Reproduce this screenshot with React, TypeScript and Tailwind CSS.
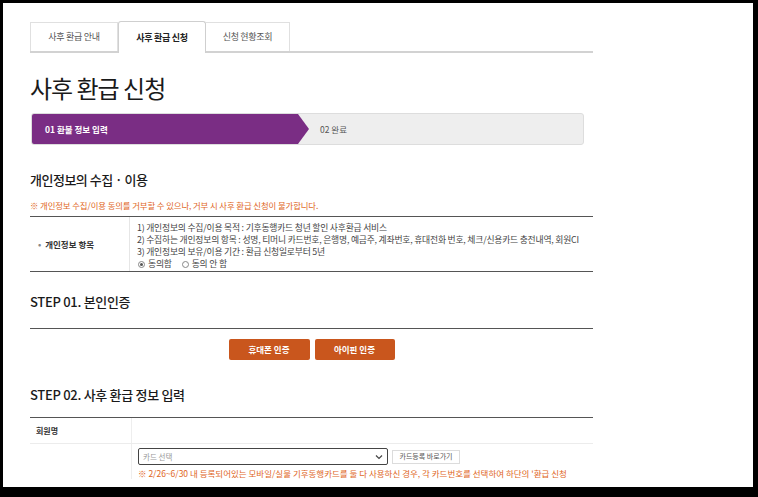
import React from "react";

const F = { fontFamily: '"Noto Sans CJK KR", "Noto Sans", sans-serif' };

export default function App() {
  return (
    <div className="w-[758px] h-[497px] bg-black pt-[3px] pl-[3px] pr-[5px] pb-[10px]" style={F}>
      <div className="bg-white h-full overflow-hidden pl-[27px] text-[#333]">
        <div className="w-[563px]">
          {/* Tabs */}
          <div className="pt-[19px]">
            <div className="flex items-end h-[31px] border-b-2 border-[#d2d2d2]">
              <div className="w-[88px] h-[29px] border border-b-0 border-[#e0e0e0] flex items-center justify-center text-[9px] text-[#555] tracking-[-0.3px]">
                사후 환급 안내
              </div>
              <div className="w-[88px] h-[32px] -mb-[2px] bg-white border border-b-0 border-[#cfcfcf] rounded-t-[3px] flex items-center justify-center text-[9px] font-bold text-[#222] tracking-[-0.3px]">
                사후 환급 신청
              </div>
              <div className="w-[84px] h-[29px] border border-b-0 border-l-0 border-[#e0e0e0] flex items-center justify-center text-[9px] text-[#555] tracking-[-0.3px]">
                신청 현황조회
              </div>
            </div>
          </div>

          {/* Title */}
          <h1 className="mt-[20px] text-[24px] leading-[30px] font-normal text-[#1a1a1a] tracking-[-1px]">사후 환급 신청</h1>

          {/* Progress */}
          <div className="mt-[10px] ml-[1px] w-[553px] h-[32px] bg-[#eeeeee] border border-[#dddddd] rounded-[3px] flex items-center overflow-hidden">
            <div className="w-[277px] h-full bg-[#7a2d84] flex items-center pl-[13px] text-white text-[8.5px] font-bold [clip-path:polygon(0_0,calc(100%-11px)_0,100%_50%,calc(100%-11px)_100%,0_100%)]">
              01 환불 정보 입력
            </div>
            <div className="ml-[11px] text-[8.5px] text-[#555]">02 완료</div>
          </div>

          {/* Privacy */}
          <h2 className="mt-[26px] text-[13px] leading-[18px] font-medium text-[#1a1a1a] tracking-[-0.5px]">개인정보의 수집 · 이용</h2>
          <p className="mt-[10px] text-[8.4px] leading-[12px] text-[#e0661c] tracking-[-0.1px]">
            ※ 개인정보 수집/이용 동의를 거부할 수 있으나, 거부 시 사후 환급 신청이 불가합니다.
          </p>
          <div className="mt-[5px] border-t border-b border-[#555] flex h-[56px]">
            <div className="w-[100px] border-r border-[#e6e6e6] flex items-center pl-[8px] text-[8.5px] font-bold text-[#333]">
              <span className="text-[#888] mr-[4px]">•</span>개인정보 항목
            </div>
            <div className="flex-1 pl-[7px] pt-[5px] text-[8.8px] leading-[12px] text-[#444] tracking-[-0.2px] whitespace-nowrap">
              <div>1) 개인정보의 수집/이용 목적 : 기후동행카드 청년 할인 사후환급 서비스</div>
              <div>2) 수집하는 개인정보의 항목 : 성명, 티머니 카드번호, 은행명, 예금주, 계좌번호, 휴대전화 번호, 체크/신용카드 충전내역, 회원CI</div>
              <div>3) 개인정보의 보유/이용 기간 : 환급 신청일로부터 5년</div>
              <div className="flex items-center">
                <span className="inline-flex w-[7px] h-[7px] rounded-full border border-[#888] items-center justify-center mr-[3px] ml-[1px]">
                  <span className="w-[3px] h-[3px] rounded-full bg-[#555]"></span>
                </span>
                <span>동의함</span>
                <span className="inline-block w-[7px] h-[7px] rounded-full border border-[#888] ml-[10px] mr-[3px]"></span>
                <span>동의 안 함</span>
              </div>
            </div>
          </div>

          {/* STEP 01 */}
          <h2 className="mt-[21px] text-[13px] leading-[18px] font-medium text-[#1a1a1a] tracking-[-0.3px]">STEP 01. 본인인증</h2>
          <div className="mt-[17px] border-t border-[#555]"></div>
          <div className="mt-[10px] flex justify-center gap-[5px]">
            <button className="w-[81px] h-[21px] rounded-[2px] bg-[#c9561d] text-white text-[8.5px] font-bold">휴대폰 인증</button>
            <button className="w-[80px] h-[21px] rounded-[2px] bg-[#c9561d] text-white text-[8.5px] font-bold">아이핀 인증</button>
          </div>

          {/* STEP 02 */}
          <h2 className="mt-[26px] text-[13px] leading-[18px] font-medium text-[#1a1a1a] tracking-[-0.3px]">STEP 02. 사후 환급 정보 입력</h2>
          <div className="mt-[13px] border-t border-[#555]"></div>
          <div className="flex h-[26px] border-b border-[#ececec]">
            <div className="w-[102px] border-r border-[#eeeeee] flex items-center pl-[6px] text-[8px] font-bold text-[#333]">회원명</div>
            <div className="flex-1"></div>
          </div>
          <div className="flex">
            <div className="w-[102px] border-r border-[#eeeeee]"></div>
            <div className="flex-1 pl-[6px] pt-[4px]">
              <div className="flex items-center">
                <div className="w-[250px] h-[17px] border border-[#444] rounded-[2px] flex items-center justify-between px-[4px] text-[7.5px] text-[#999]">
                  <span>카드 선택</span>
                  <svg width="8" height="6" viewBox="0 0 8 6">
                    <path d="M1 1.5 L4 4.5 L7 1.5" fill="none" stroke="#444" strokeWidth="1.2" />
                  </svg>
                </div>
                <div className="ml-[4px] w-[68px] h-[14px] border border-[#dcdcdc] flex items-center justify-center text-[7px] text-[#555]">카드등록 바로가기</div>
              </div>
              <p className="mt-[2px] text-[8.5px] leading-[12px] text-[#e0661c] whitespace-nowrap">
                ※ 2/26~6/30 내 등록되어있는 모바일/실물 기후동행카드를 둘 다 사용하신 경우, 각 카드번호를 선택하여 하단의 '환급 신청
              </p>
            </div>
          </div>
        </div>
      </div>
    </div>
  );
}
